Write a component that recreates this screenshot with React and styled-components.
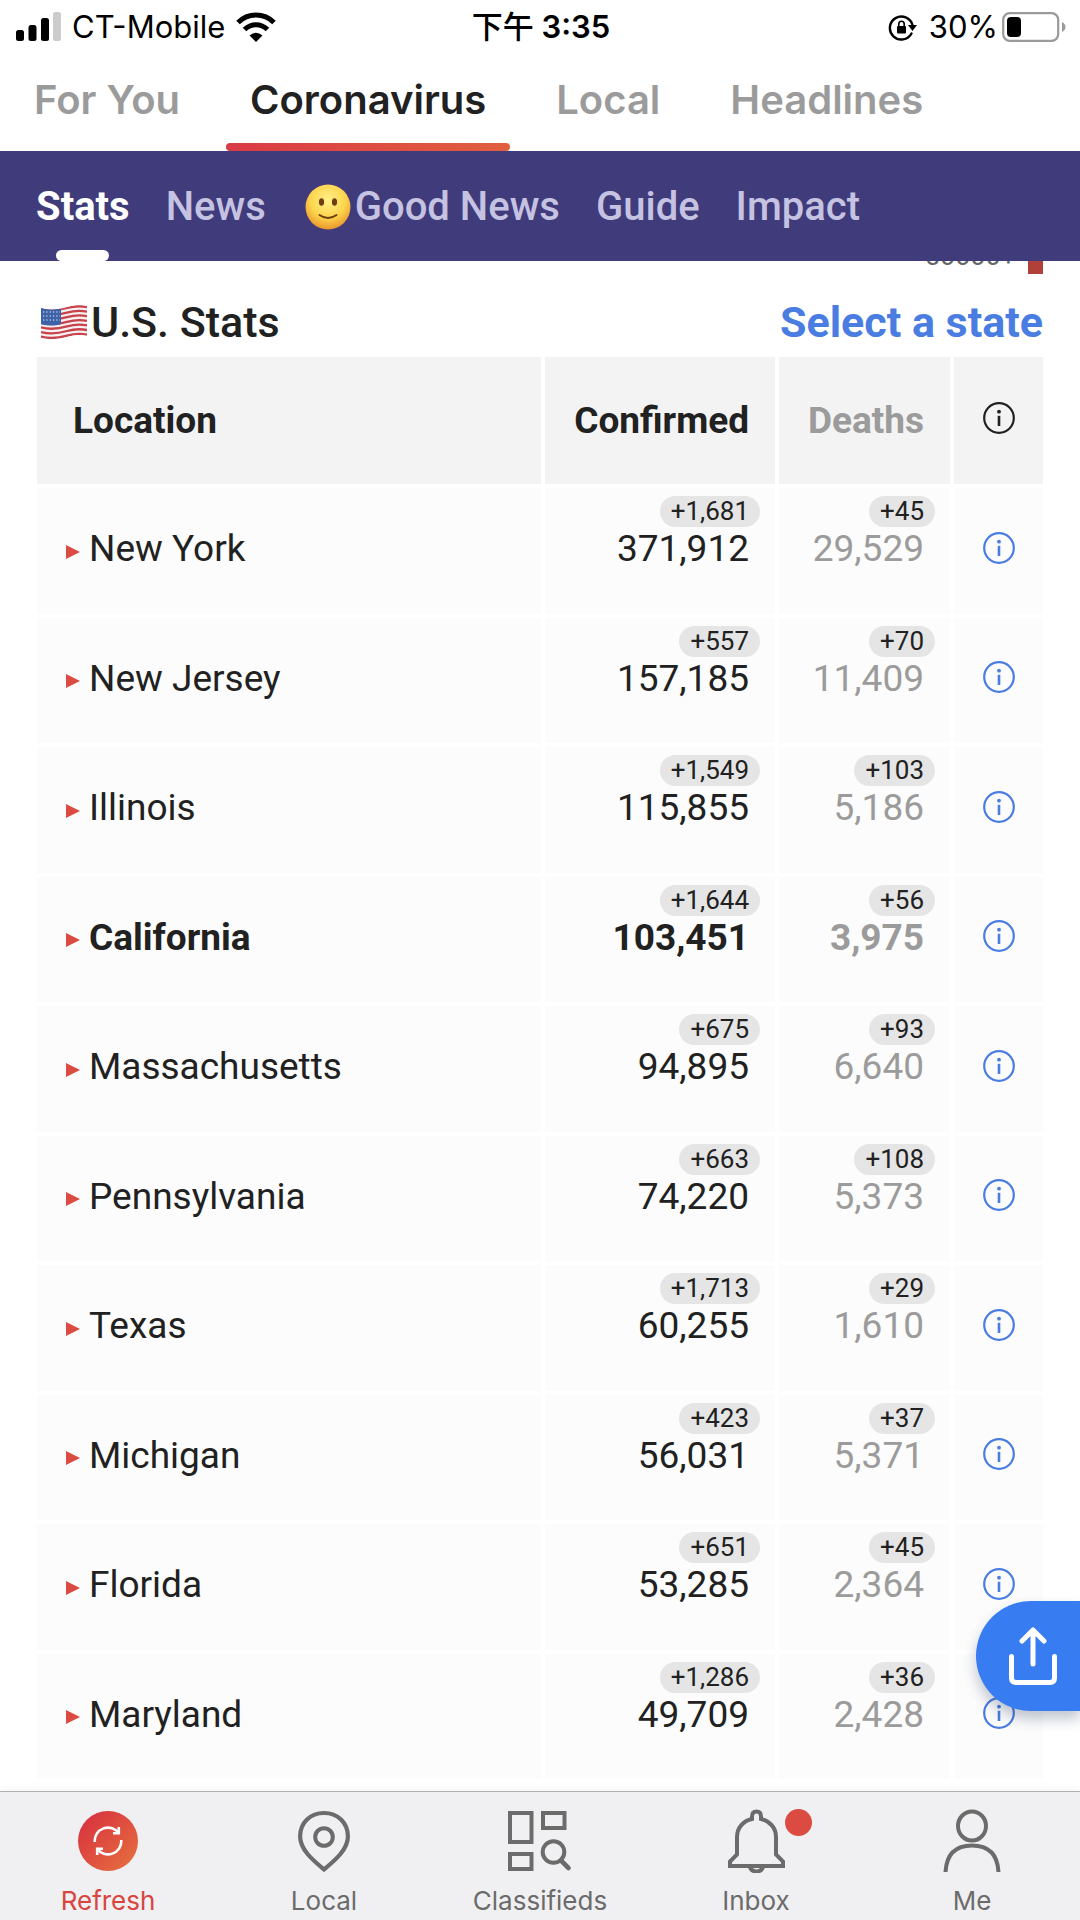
import React from "react";
import styled, { createGlobalStyle } from "styled-components";

const UI = `Inter, "Noto Sans CJK TC", sans-serif`;
const BODY = `Roboto, "Noto Sans", sans-serif`;

const GlobalStyle = createGlobalStyle`
  *, *::before, *::after { box-sizing: border-box; }
  body { margin: 0; background: #fff; color: #212121; font-family: ${BODY}; }
  button { margin: 0; padding: 0; border: 0; background: none; font: inherit; color: inherit; cursor: pointer; }
  a { color: inherit; text-decoration: none; }
  svg { display: block; flex: none; }
`;

const Page = styled.div`
  display: flex;
  flex-direction: column;
  height: 100vh;
  overflow: hidden;
`;

const StatusBar = styled.header`
  display: grid;
  grid-template-columns: 1fr auto 1fr;
  align-items: center;
  height: 54px;
  padding: 0 14px 0 16px;
  font-family: ${UI};
  font-size: 31px;
  line-height: 36px;
  color: #000;
`;

const StatusGroup = styled.div`
  display: flex;
  align-items: center;
  justify-content: ${(p) => (p.$end ? "flex-end" : "flex-start")};
  gap: ${(p) => p.$gap}px;
`;

const Clock = styled.time`
  font-weight: 600;
`;

const Meridiem = styled.span`
  font-weight: 500;
`;

const TopTabs = styled.nav`
  display: flex;
  gap: 22px;
  height: 97px;
  padding-left: 10px;
`;

const TopTab = styled.a`
  display: flex;
  flex-direction: column;
  justify-content: space-between;
  padding-top: 22px;
  font-family: ${UI};
  font-size: 40px;
  font-weight: 600;
  line-height: 48px;
  color: ${(p) => (p.$active ? "#212121" : "#9b9b9b")};

  span { padding: 0 24px; }

  &::after {
    content: "";
    height: 8px;
    border-radius: 4px;
    background: ${(p) => (p.$active ? "linear-gradient(90deg, #d93a45, #e0603f)" : "none")};
  }
`;

const SubTabs = styled.nav`
  position: relative;
  z-index: 1;
  display: flex;
  gap: 36px;
  height: 110px;
  padding: 0 36px;
  background: #403b7b;
`;

const SubTab = styled.a`
  display: flex;
  flex-direction: column;
  align-items: center;
  justify-content: space-between;
  padding-top: 32px;
  font-size: 40px;
  font-weight: ${(p) => (p.$active ? 700 : 500)};
  line-height: 48px;
  color: ${(p) => (p.$active ? "#fff" : "#c5c2e2")};

  span { display: flex; align-items: center; gap: 4px; }

  &::after {
    content: "";
    width: 53px;
    height: 11px;
    border-radius: 6px;
    background: ${(p) => (p.$active ? "#fff" : "none")};
  }
`;

const Main = styled.main`
  position: relative;
  flex: 1;
  min-height: 0;
  padding: 0 37px;
`;

const Legend = styled.div`
  display: flex;
  align-items: center;
  justify-content: flex-end;
  gap: 12px;
  height: 36px;
  margin-top: -23px;
  font-size: 27px;
  line-height: 36px;
  color: #666;
`;

const Swatch = styled.i`
  width: 15px;
  height: 36px;
  background: #b0403a;
`;

const SectionHead = styled.div`
  display: flex;
  align-items: center;
  justify-content: space-between;
  height: 70px;
  margin-top: 13px;
  font-size: 43px;
  line-height: 50px;
`;

const SectionTitle = styled.h2`
  display: flex;
  align-items: center;
  gap: 3px;
  margin: 0;
  padding-left: 3px;
  font-size: inherit;
  font-weight: 500;
`;

const SelectState = styled.a`
  font-weight: 700;
  color: #4a7de2;
`;

const Table = styled.table`
  width: 100%;
  table-layout: fixed;
  border-collapse: separate;
  border-spacing: 0;
`;

const Col = styled.col`
  width: ${(p) => p.$w}px;
`;

const HeadCell = styled.th`
  height: 131px;
  padding: 0 ${(p) => (p.$num ? 26 : 0)}px 0 ${(p) => (p.$num ? 0 : 36)}px;
  border-right: 4px solid #fff;
  border-bottom: 4px solid #fff;
  background: #f3f3f3;
  font-size: 37px;
  font-weight: 700;
  line-height: 42px;
  text-align: ${(p) => (p.$num ? "right" : "left")};
  color: ${(p) => (p.$muted ? "#9b9b9b" : "#212121")};

  &:last-child { border-right: 0; padding: 0 0 6px; }
`;

const Row = styled.tr`
  height: 130px;
  font-size: 37px;
  font-weight: ${(p) => (p.$bold ? 700 : 400)};
  line-height: 44px;

  &:nth-child(even) { height: 129px; }
`;

const Cell = styled.td`
  padding: 0;
  border-right: 4px solid #fff;
  border-bottom: 4px solid #fff;
  background: #fcfcfc;

  &:last-child { border-right: 0; padding-bottom: 7px; }
`;

const Place = styled.button`
  display: flex;
  align-items: center;
  gap: 9px;
  padding: 0 0 4px 29px;
  font-weight: inherit;

  svg { margin-top: 5px; }
`;

const NumCell = styled(Cell)`
  padding: 8px 26px 0 0;
  vertical-align: top;
  text-align: right;
  color: ${(p) => (p.$muted ? "#9b9b9b" : "#212121")};
`;

const Delta = styled.span`
  display: block;
  width: fit-content;
  margin: 0 -11px 0 auto;
  padding: 0 11px;
  border-radius: 16px;
  background: #e5e5e5;
  font-size: 26px;
  font-weight: 400;
  line-height: 31px;
  color: #212121;
`;

const InfoButton = styled.button`
  display: block;
  margin: 0 auto;
  color: ${(p) => (p.$dark ? "#212121" : "#4a7de2")};
`;

const ShareButton = styled.button`
  position: absolute;
  right: 0;
  bottom: 80px;
  display: flex;
  align-items: center;
  width: 104px;
  height: 110px;
  padding-left: 33px;
  border-radius: 55px 0 0 55px;
  background: #377cf0;
  box-shadow: 0 8px 14px rgba(30, 50, 90, 0.28);
`;

const BottomNav = styled.nav`
  position: relative;
  display: grid;
  grid-template-columns: repeat(5, 1fr);
  height: 129px;
  border-top: 1px solid #b0b0b2;
  background: #f0f0f2;
  box-shadow: 0 -4px 8px rgba(0, 0, 0, 0.03);
`;

const NavItem = styled.a`
  display: flex;
  flex-direction: column;
  align-items: center;
  gap: 12px;
  padding-top: 17px;
  font-family: ${UI};
  font-size: 26px;
  line-height: 32px;
  color: ${(p) => (p.$active ? "#d9453f" : "#6b6b6b")};
`;

const NavIcon = styled.span`
  position: relative;
  display: block;
  width: 64px;
  height: 64px;
`;

const Unread = styled.i`
  position: absolute;
  top: 0;
  left: 61px;
  width: 27px;
  height: 27px;
  border-radius: 50%;
  background: #db4b42;
`;

const Signal = () => (
  <svg width="45" height="30" viewBox="0 0 45 30" role="img" aria-label="Signal">
    <rect x="0" y="18" width="8" height="11" rx="2.5" />
    <rect x="12.5" y="13" width="8" height="16" rx="2.5" />
    <rect x="25" y="6" width="8" height="23" rx="2.5" />
    <rect x="37" y="0" width="8" height="29" rx="2.5" fill="#ccc" />
  </svg>
);

const Wifi = () => (
  <svg width="40" height="30" viewBox="0 0 40 30" role="img" aria-label="Wi-Fi">
    <g fill="none" stroke="#000" strokeWidth="5">
      <path d="M2 10.5C12 .5 28 .5 38 10.5" />
      <path d="M8.5 17.5C15 11 25 11 31.5 17.5" />
    </g>
    <path d="M13.5 23.5Q20 18 26.5 23.5L20 30Z" />
  </svg>
);

const RotationLock = () => (
  <svg width="30" height="28" viewBox="0 0 30 28" role="img" aria-label="Rotation lock">
    <path d="M23.5 20.5A11.5 11.5 0 1 1 24.5 12" fill="none" stroke="#000" strokeWidth="2.4" strokeLinecap="round" />
    <path d="M20 12h9l-4.5 6z" />
    <rect x="9" y="13" width="9" height="7.5" rx="1" />
    <path d="M10.8 13.5v-2.5a2.7 2.7 0 0 1 5.4 0v2.5" fill="none" stroke="#000" strokeWidth="1.6" />
  </svg>
);

const Battery = () => (
  <svg width="64" height="30" viewBox="0 0 64 30" role="img" aria-label="Battery">
    <rect x="1.2" y="1.2" width="55" height="27.6" rx="6.5" fill="none" stroke="#9a9a9a" strokeWidth="2.2" />
    <rect x="5" y="5" width="14" height="20" rx="4" />
    <path d="M60 10q3.5 2 3.5 5t-3.5 5z" fill="#9a9a9a" />
  </svg>
);

const Smile = () => (
  <svg width="49" height="46" viewBox="-3 0 49 46" aria-hidden="true">
    <defs>
      <radialGradient id="face" cx="50%" cy="35%" r="65%">
        <stop offset="0" stopColor="#fff08a" />
        <stop offset="0.6" stopColor="#fdd54c" />
        <stop offset="1" stopColor="#e9962c" />
      </radialGradient>
    </defs>
    <circle cx="23" cy="23" r="22.5" fill="url(#face)" />
    <ellipse cx="16.5" cy="18" rx="2.6" ry="3.8" fill="#6b3f10" />
    <ellipse cx="29.5" cy="18" rx="2.6" ry="3.8" fill="#6b3f10" />
    <path d="M14.5 31Q23 37 31.5 31" fill="none" stroke="#6b3f10" strokeWidth="2" strokeLinecap="round" />
  </svg>
);

const stripes = [0, 1, 2, 3, 4, 5, 6];

const Flag = () => (
  <svg width="48" height="34" viewBox="0 0 48 34" role="img" aria-label="United States">
    <defs>
      <clipPath id="wave">
        <path d="M1 3C12 6 20 4 27 2S42 0 47 1V31C40 29 34 30 27 32S12 35 1 33Z" />
      </clipPath>
    </defs>
    <g clipPath="url(#wave)">
      <rect width="48" height="34" fill="#f6f0f1" />
      {stripes.map((i) => (
        <path
          key={i}
          d={`M1 ${4 + i * 4.6}C12 ${7 + i * 4.6} 20 ${5 + i * 4.6} 27 ${3 + i * 4.6}S42 ${1 + i * 4.6} 47 ${2 + i * 4.6}`}
          fill="none"
          stroke="#c8414b"
          strokeWidth="2.3"
        />
      ))}
      <path d="M0 2C8 5 15 5 21 3V19C15 21 8 21 0 19Z" fill="#3d63a6" />
      {[7, 11, 15].map((y) => (
        <path key={y} d={`M3 ${y}h17`} stroke="#a9bfe2" strokeWidth="1.3" strokeDasharray="1.3 2" />
      ))}
    </g>
  </svg>
);

const Info = () => (
  <svg width="32" height="32" viewBox="0 0 32 32" aria-hidden="true">
    <circle cx="16" cy="16" r="14.8" fill="none" stroke="currentColor" strokeWidth="2.2" />
    <circle cx="16" cy="9.7" r="1.9" fill="currentColor" />
    <path d="M16 13.8v10.2" stroke="currentColor" strokeWidth="2.6" />
  </svg>
);

const Triangle = () => (
  <svg width="14" height="14" viewBox="0 0 14 14" aria-hidden="true">
    <path d="M0 0L14 7L0 14Z" fill="#db4b42" />
  </svg>
);

const Share = () => (
  <svg width="48" height="58" viewBox="0 0 48 58" aria-hidden="true">
    <g fill="none" stroke="#fff" strokeWidth="5" strokeLinecap="round" strokeLinejoin="round">
      <path d="M2.5 29.5V51q0 4.5 4.5 4.5H41q4.5 0 4.5-4.5V29.5" />
      <path d="M24 37V3.5M13 14L24 3L35 14" />
    </g>
  </svg>
);

const icons = {
  refresh: (
    <svg width="64" height="64" viewBox="0 0 64 64" aria-hidden="true">
      <defs>
        <linearGradient id="hot" x1="0.1" y1="0.2" x2="0.8" y2="0.9">
          <stop offset="0" stopColor="#d9373f" />
          <stop offset="1" stopColor="#e4683f" />
        </linearGradient>
      </defs>
      <circle cx="32" cy="32" r="30" fill="url(#hot)" />
      <g fill="none" stroke="#fff" strokeWidth="2.6">
        <path d="M18.7 33A13.3 13.3 0 0 1 43 24.5" />
        <path d="M45.3 31A13.3 13.3 0 0 1 21 39.5" />
        <path d="M42.8 18V24.2H37" />
        <path d="M21.2 46V39.8H27" />
      </g>
    </svg>
  ),
  local: (
    <svg width="64" height="64" viewBox="0 0 64 64" fill="none" stroke="currentColor" strokeWidth="4.2" aria-hidden="true">
      <path d="M32 60.5C22 52 8.1 41 8.1 27.5C8.1 13.5 18.5 4 32 4S55.9 13.5 55.9 27.5C55.9 41 42 52 32 60.5Z" />
      <circle cx="32" cy="28" r="8.8" strokeWidth="4" />
    </svg>
  ),
  classifieds: (
    <svg width="64" height="64" viewBox="0 0 64 64" fill="none" stroke="currentColor" strokeWidth="4" aria-hidden="true">
      <rect x="2" y="4" width="21.5" height="29" />
      <rect x="2" y="45" width="21.5" height="15" />
      <rect x="35" y="4" width="21.5" height="15" />
      <circle cx="45.5" cy="43" r="10.8" />
      <path d="M53 51.5L60.5 59" strokeWidth="4.6" strokeLinecap="round" />
    </svg>
  ),
  inbox: (
    <svg width="64" height="64" viewBox="0 0 64 64" fill="none" stroke="currentColor" strokeWidth="4" aria-hidden="true">
      <path d="M6 57V52.5L13 45.5V28C13 19 19 12 28 10V7.5Q28 2.5 32.5 2.5T37 7.5V10C46 12 52 19 52 28V45.5L59 52.5V57Z" />
      <path d="M26 58Q27.5 62.5 32.5 62.5T39 58" />
    </svg>
  ),
  me: (
    <svg width="64" height="64" viewBox="0 0 64 64" fill="none" stroke="currentColor" strokeWidth="4" aria-hidden="true">
      <ellipse cx="32" cy="17" rx="14" ry="14.5" />
      <path d="M5.5 63C6.5 45 16 36.5 32 36.5S57.5 45 58.5 63" />
    </svg>
  ),
};

const states = [
  ["New York", "+1,681", "371,912", "+45", "29,529"],
  ["New Jersey", "+557", "157,185", "+70", "11,409"],
  ["Illinois", "+1,549", "115,855", "+103", "5,186"],
  ["California", "+1,644", "103,451", "+56", "3,975"],
  ["Massachusetts", "+675", "94,895", "+93", "6,640"],
  ["Pennsylvania", "+663", "74,220", "+108", "5,373"],
  ["Texas", "+1,713", "60,255", "+29", "1,610"],
  ["Michigan", "+423", "56,031", "+37", "5,371"],
  ["Florida", "+651", "53,285", "+45", "2,364"],
  ["Maryland", "+1,286", "49,709", "+36", "2,428"],
];

const topTabs = ["For You", "Coronavirus", "Local", "Headlines"];
const subTabs = ["Stats", "News", "Good News", "Guide", "Impact"];
const navItems = [
  ["refresh", "Refresh"],
  ["local", "Local"],
  ["classifieds", "Classifieds"],
  ["inbox", "Inbox"],
  ["me", "Me"],
];

export default function App() {
  return (
    <Page>
      <GlobalStyle />
      <StatusBar>
        <StatusGroup $gap={11}>
          <Signal />
          <span>CT-Mobile</span>
          <Wifi />
        </StatusGroup>
        <Clock>
          <Meridiem>下午</Meridiem> 3:35
        </Clock>
        <StatusGroup $end $gap={4}>
          <StatusGroup $gap={11}>
            <RotationLock />
            <span>30%</span>
          </StatusGroup>
          <Battery />
        </StatusGroup>
      </StatusBar>

      <TopTabs>
        {topTabs.map((t) => (
          <TopTab key={t} href="#" $active={t === "Coronavirus"}>
            <span>{t}</span>
          </TopTab>
        ))}
      </TopTabs>

      <SubTabs>
        {subTabs.map((t) => (
          <SubTab key={t} href="#" $active={t === "Stats"}>
            <span>
              {t === "Good News" && <Smile />}
              {t}
            </span>
          </SubTab>
        ))}
      </SubTabs>

      <Main>
        <Legend>
          50000+
          <Swatch />
        </Legend>
        <SectionHead>
          <SectionTitle>
            <Flag />
            U.S. Stats
          </SectionTitle>
          <SelectState href="#">Select a state</SelectState>
        </SectionHead>

        <Table>
          <colgroup>
            <col />
            <Col $w={234} />
            <Col $w={175} />
            <Col $w={89} />
          </colgroup>
          <thead>
            <tr>
              <HeadCell scope="col">Location</HeadCell>
              <HeadCell scope="col" $num>Confirmed</HeadCell>
              <HeadCell scope="col" $num $muted>Deaths</HeadCell>
              <HeadCell scope="col">
                <InfoButton $dark aria-label="About this table">
                  <Info />
                </InfoButton>
              </HeadCell>
            </tr>
          </thead>
          <tbody>
            {states.map(([name, newCases, cases, newDeaths, deaths]) => (
              <Row key={name} $bold={name === "California"}>
                <Cell>
                  <Place>
                    <Triangle />
                    {name}
                  </Place>
                </Cell>
                <NumCell>
                  <Delta>{newCases}</Delta>
                  {cases}
                </NumCell>
                <NumCell $muted>
                  <Delta>{newDeaths}</Delta>
                  {deaths}
                </NumCell>
                <Cell>
                  <InfoButton aria-label={`About ${name}`}>
                    <Info />
                  </InfoButton>
                </Cell>
              </Row>
            ))}
          </tbody>
        </Table>

        <ShareButton aria-label="Share">
          <Share />
        </ShareButton>
      </Main>

      <BottomNav>
        {navItems.map(([id, label]) => (
          <NavItem key={id} href="#" $active={id === "refresh"}>
            <NavIcon>
              {icons[id]}
              {id === "inbox" && <Unread />}
            </NavIcon>
            {label}
          </NavItem>
        ))}
      </BottomNav>
    </Page>
  );
}
